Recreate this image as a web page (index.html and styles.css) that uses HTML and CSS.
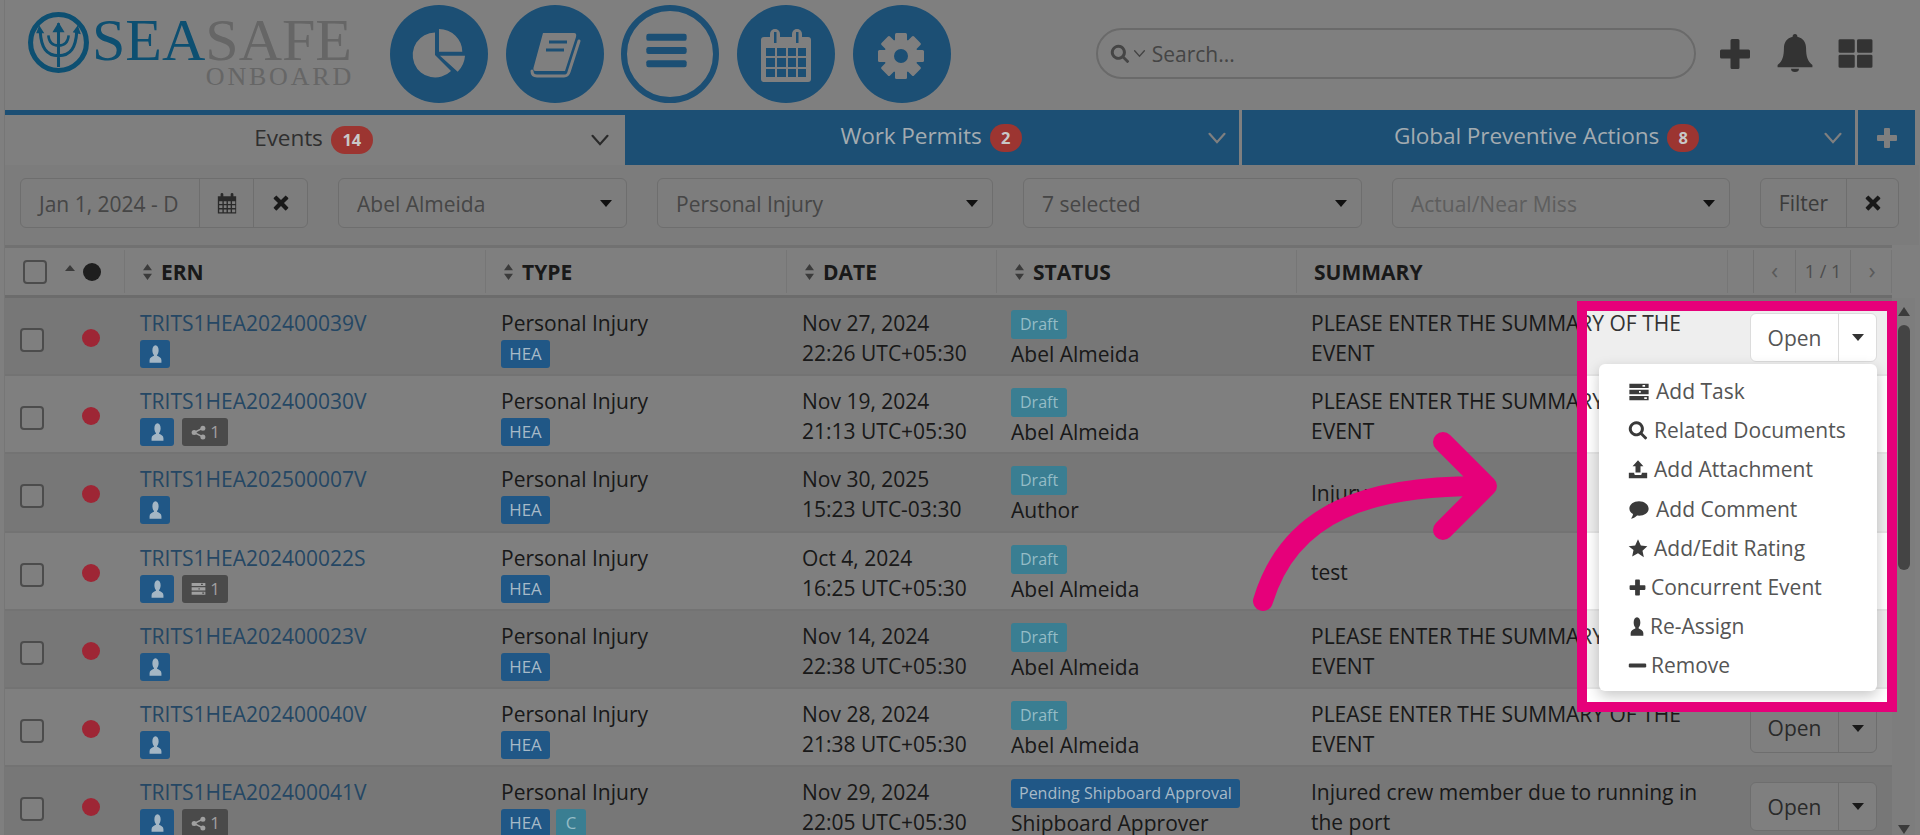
FILE: index.html
```html
<!DOCTYPE html>
<html lang="en">
<head>
<meta charset="utf-8">
<title>SeaSafe Onboard - Events</title>
<link rel="stylesheet" href="styles.css">
</head>
<body>
<svg class="defs" width="0" height="0" aria-hidden="true">
  <symbol id="i-user" viewBox="0 0 24 24" preserveAspectRatio="none"><path d="M12 1.500c3.100 0 5 2.600 5 6 0 2.400-1 4.600-2.500 5.700v1c3.500 1 7 2.500 7 5.300v3H2.500v-3c0-2.800 3.500-4.300 7-5.300v-1C8 12.100 7 9.900 7 7.500c0-3.400 1.900-6 5-6z"/></symbol>
  <symbol id="i-plus" viewBox="0 0 24 24"><path d="M10 2h4a1 1 0 0 1 1 1v6h6a1 1 0 0 1 1 1v4a1 1 0 0 1-1 1h-6v6a1 1 0 0 1-1 1h-4a1 1 0 0 1-1-1v-6H3a1 1 0 0 1-1-1v-4a1 1 0 0 1 1-1h6V3a1 1 0 0 1 1-1z"/></symbol>
  <symbol id="i-x" viewBox="0 0 24 24"><path d="M6.500 2.500 12 8l5.500-5.500a1 1 0 0 1 1.400 0l2.600 2.600a1 1 0 0 1 0 1.400L16 12l5.500 5.500a1 1 0 0 1 0 1.400l-2.600 2.600a1 1 0 0 1-1.400 0L12 16l-5.500 5.500a1 1 0 0 1-1.400 0l-2.600-2.600a1 1 0 0 1 0-1.400L8 12 2.500 6.500a1 1 0 0 1 0-1.400l2.600-2.600a1 1 0 0 1 1.400 0z"/></symbol>
  <symbol id="i-search" viewBox="0 0 24 24"><path fill-rule="evenodd" d="M10 1a9 9 0 1 0 5.200 16.300l5 5.200a1 1 0 0 0 1.400 0l1-1a1 1 0 0 0 0-1.400l-5.100-5.100A9 9 0 0 0 10 1zm0 3.500a5.500 5.500 0 1 1 0 11 5.500 5.500 0 0 1 0-11z"/></symbol>
  <symbol id="i-bell" viewBox="0 0 24 24"><path d="M12 0c1 0 1.500.7 1.500 1.700 3.700.8 5.500 3.700 5.500 7.300 0 5 1 8.500 4 10.500v1.500H1v-1.500C4 17.500 5 14 5 9c0-3.600 1.800-6.500 5.500-7.300C10.500.7 11 0 12 0zM9.500 22h5a2.500 2 0 0 1-5 0z"/></symbol>
  <symbol id="i-grid" viewBox="0 0 24 24" preserveAspectRatio="none"><path d="M2 1h8.500a1 1 0 0 1 1 1v8.500a1 1 0 0 1-1 1H2a1 1 0 0 1-1-1V2a1 1 0 0 1 1-1zM14 1h8a1 1 0 0 1 1 1v8.500a1 1 0 0 1-1 1h-8a1 1 0 0 1-1-1V2a1 1 0 0 1 1-1zM2 13h8.500a1 1 0 0 1 1 1v8a1 1 0 0 1-1 1H2a1 1 0 0 1-1-1v-8a1 1 0 0 1 1-1zM14 13h8a1 1 0 0 1 1 1v8a1 1 0 0 1-1 1h-8a1 1 0 0 1-1-1v-8a1 1 0 0 1 1-1z"/></symbol>
  <symbol id="i-star" viewBox="0 0 24 24"><path d="M12 1l3.400 7.300 7.800 1-5.800 5.400 1.600 7.900L12 17.700l-7 3.900 1.600-7.900L.8 9.300l7.800-1z"/></symbol>
  <symbol id="i-comment" viewBox="0 0 24 24"><path d="M12 2.500C5.900 2.500 1 6.200 1 10.800c0 2.600 1.600 4.900 4.200 6.400-.3 2-1.200 3.700-2.200 5.300 2.900-.5 5.200-2 6.800-3.600.7.100 1.500.1 2.200.1 6.100 0 11-3.400 11-8S18.100 2.500 12 2.500z"/></symbol>
  <symbol id="i-upload" viewBox="0 0 24 24"><path d="M12 1l6.500 7H15v7.500H9V8H5.500zM1 16h6.500v1.500c0 .6.500 1 1 1h7c.5 0 1-.4 1-1V16H23v6.500H1z"/></symbol>
  <symbol id="i-tasks" viewBox="0 0 24 24"><path fill-rule="evenodd" d="M1 3h22v5H1zm15 1.500v2h3v-2zM1 10h22v5H1zm11 1.500v2h2v-2zM1 17h22v5H1zm17 1.500v2h3v-2z"/></symbol>
  <symbol id="i-minus" viewBox="0 0 24 24"><rect x="1" y="9.500" width="22" height="5" rx="1.500"/></symbol>
  <symbol id="i-share" viewBox="0 0 24 24"><circle cx="19" cy="5" r="4"/><circle cx="5" cy="12" r="4"/><circle cx="19" cy="19" r="4"/><path d="M5 12 19 5M5 12l14 7" stroke="currentColor" stroke-width="2.500" fill="none"/></symbol>
  <symbol id="i-cal" viewBox="0 0 24 24"><path fill-rule="evenodd" d="M2 4h3V2a1.500 1.500 0 0 1 3 0v2h8V2a1.500 1.500 0 0 1 3 0v2h3v19H2zm1.500 5.500v3h3.500v-3zm5 0v3h3v-3zm4.500 0v3h3v-3zm4.500 0v3h3.500v-3zm-14 4.500v3h3.500v-3zm5 0v3h3v-3zm4.500 0v3h3v-3zm4.500 0v3h3.500v-3zm-14 4.500v3h3.500v-3zm5 0v3h3v-3zm4.500 0v3h3v-3zm4.500 0v3h3.500v-3z"/></symbol>
  <symbol id="i-chev" viewBox="0 0 24 24"><path d="M3 7l9 10 9-10" fill="none" stroke="currentColor" stroke-width="2.600" stroke-linecap="round"/></symbol>
  <symbol id="i-caret" viewBox="0 0 12 7"><path d="M0 0h12L6 7z"/></symbol>
  <symbol id="i-sort" viewBox="0 0 12 20"><path d="M6 1l5 7H1zM6 19l-5-7h10z"/></symbol>
</svg>

<div class="page">
  <header class="topbar">
    <a class="logo">
      <svg class="logo-mark" viewBox="0 0 62 62">
        <circle cx="31" cy="31" r="27.500" fill="none" stroke="currentColor" stroke-width="5"/>
        <path d="M31 12V55M13 20c1 16 6 24 18 24s17-8 18-24" fill="none" stroke="currentColor" stroke-width="3"/>
        <path d="M31 11l-6 10h12zM12 14l-3 8h8zM50 14l-5 7 8 2z" fill="currentColor"/>
        <path d="M21 24c.5 6 3 10 10 10s9.500-4 10-10" fill="none" stroke="currentColor" stroke-width="2.500"/>
      </svg>
      <span class="logo-text">
        <span class="logo-main"><span class="logo-sea">SEA</span>SAFE</span>
        <span class="logo-sub">ONBOARD</span>
      </span>
    </a>
    <nav class="nav">
      <span class="nav-btn">
        <svg viewBox="0 0 98 98"><path d="M45 50V27.500A22.500 22.500 0 1 0 61 66z M49 46.700V24A23.300 22.700 0 0 1 72.300 46.700z M50 50.700H75A25 25 0 0 1 67.700 66.700z" fill="#fff"/></svg>
      </span>
      <span class="nav-btn">
        <svg viewBox="0 0 98 98"><path d="M37 28H68Q71 28 70 32L59 66H30Q26 66 28 61z" fill="#fff"/><path d="M73 36 63 67Q62 71 58 71H31Q26 71 26 66" fill="none" stroke="#fff" stroke-width="3" stroke-linecap="round"/><path d="M43 37H61M40 45H58" stroke="#389ee8" stroke-width="3"/></svg>
      </span>
      <span class="nav-btn nav-btn-outline">
        <svg viewBox="0 0 98 98"><rect x="22" y="26" width="46" height="8" rx="2.500"/><rect x="22" y="41" width="46" height="8" rx="2.500"/><rect x="22" y="56" width="46" height="8" rx="2.500"/></svg>
      </span>
      <span class="nav-btn">
        <svg viewBox="0 0 98 98"><rect x="24" y="32" width="50" height="45" rx="3" fill="#fff"/><g fill="#389ee8"><path d="M29 43h9v8h-9zM40 43h9v8h-9zM51 43h8v8h-8zM61 43h8v8h-8zM29 53h9v9h-9zM40 53h9v9h-9zM51 53h8v9h-8zM61 53h8v9h-8zM29 64h9v8h-9zM40 64h9v8h-9zM51 64h8v8h-8zM61 64h8v8h-8z"/></g><rect x="33" y="24" width="10" height="16" rx="5" fill="#fff"/><rect x="55" y="24" width="10" height="16" rx="5" fill="#fff"/><rect x="37" y="27" width="2.500" height="11" fill="#389ee8"/><rect x="59" y="27" width="2.500" height="11" fill="#389ee8"/></svg>
      </span>
      <span class="nav-btn">
        <svg viewBox="0 0 98 98"><g transform="translate(48 51)" fill="#fff"><rect x="-6" y="-23" width="12" height="46" rx="1.500"/><rect x="-6" y="-23" width="12" height="46" rx="1.500" transform="rotate(45)"/><rect x="-6" y="-23" width="12" height="46" rx="1.500" transform="rotate(90)"/><rect x="-6" y="-23" width="12" height="46" rx="1.500" transform="rotate(135)"/><circle r="17"/><circle r="7" fill="#389ee8"/></g></svg>
      </span>
    </nav>
    <div class="search">
      <svg class="search-ic"><use href="#i-search"/></svg>
      <svg class="search-chev"><use href="#i-chev"/></svg>
      <span class="search-ph">Search...</span>
    </div>
    <div class="tools">
      <svg class="tool-plus"><use href="#i-plus"/></svg>
      <svg class="tool-bell"><use href="#i-bell"/></svg>
      <svg class="tool-grid"><use href="#i-grid"/></svg>
    </div>
  </header>

  <div class="tabs">
    <div class="tab tab-events">
      <span></span><span class="tab-label lift">Events <b class="pill pill-wide">14</b></span><svg class="tab-chev"><use href="#i-chev"/></svg>
    </div>
    <div class="tab tab-permits">
      <span></span><span class="tab-label lift">Work Permits <b class="pill">2</b></span><svg class="tab-chev"><use href="#i-chev"/></svg>
    </div>
    <div class="tab tab-global">
      <span></span><span class="tab-label lift">Global Preventive Actions <b class="pill">8</b></span><svg class="tab-chev"><use href="#i-chev"/></svg>
    </div>
    <div class="tab-add"><svg><use href="#i-plus"/></svg></div>
  </div>

  <div class="filters">
    <div class="group group-date">
      <span class="field field-date">Jan 1, 2024 - D</span>
      <span class="addon"><svg class="addon-cal"><use href="#i-cal"/></svg></span>
      <span class="addon"><svg class="addon-x"><use href="#i-x"/></svg></span>
    </div>
    <div class="select sel-author"><span>Abel Almeida</span><svg><use href="#i-caret"/></svg></div>
    <div class="select sel-type"><span>Personal Injury</span><svg><use href="#i-caret"/></svg></div>
    <div class="select sel-status"><span>7 selected</span><svg><use href="#i-caret"/></svg></div>
    <div class="select sel-kind"><span class="muted">Actual/Near Miss</span><svg><use href="#i-caret"/></svg></div>
    <div class="group group-filter">
      <span class="addon addon-filter">Filter</span>
      <span class="addon"><svg class="addon-x"><use href="#i-x"/></svg></span>
    </div>
  </div>

  <div class="thead">
    <div class="th th-sel"><span class="check check-head"></span><svg class="sort-up"><use href="#i-caret"/></svg><span class="dot dot-head"></span></div>
    <div class="th"><svg class="sort"><use href="#i-sort"/></svg>ERN</div>
    <div class="th"><svg class="sort"><use href="#i-sort"/></svg>TYPE</div>
    <div class="th"><svg class="sort"><use href="#i-sort"/></svg>DATE</div>
    <div class="th"><svg class="sort"><use href="#i-sort"/></svg>STATUS</div>
    <div class="th th-summary">SUMMARY</div>
    <div class="pager"><span class="pg-arrow">&#8249;</span><span class="pg-num">1 / 1</span><span class="pg-arrow">&#8250;</span></div>
  </div>

  <div class="tbody">
    <div class="rows">
      <div class="row odd">
        <div class="cell-sel"><span class="check"></span><span class="dot"></span></div>
        <div class="cell"><a class="ern">TRITS1HEA202400039V</a><div class="tags"><span class="tag tag-user"><svg><use href="#i-user"/></svg></span></div></div>
        <div class="cell">Personal Injury<div class="tags"><span class="tag tag-blue">HEA</span></div></div>
        <div class="cell">Nov 27, 2024<br>22:26 UTC+05:30</div>
        <div class="cell cell-status"><span class="state state-draft">Draft</span>Abel Almeida</div>
        <div class="cell cell-summary">PLEASE ENTER THE SUMMARY OF THE EVENT</div>
        <div class="cell-action">
          <div class="open"><span class="open-main">Open</span><span class="open-caret"><svg><use href="#i-caret"/></svg></span></div>
          <ul class="menu">
            <li><svg class="m-task"><use href="#i-tasks"/></svg>Add Task</li>
            <li><svg class="m-mid"><use href="#i-search"/></svg>Related Documents</li>
            <li><svg class="m-mid"><use href="#i-upload"/></svg>Add Attachment</li>
            <li><svg class="m-task"><use href="#i-comment"/></svg>Add Comment</li>
            <li><svg class="m-mid"><use href="#i-star"/></svg>Add/Edit Rating</li>
            <li><svg class="m-short"><use href="#i-plus"/></svg>Concurrent Event</li>
            <li><svg class="m-user"><use href="#i-user"/></svg>Re-Assign</li>
            <li><svg class="m-short"><use href="#i-minus"/></svg>Remove</li>
          </ul>
        </div>
      </div>
      <div class="row">
        <div class="cell-sel"><span class="check"></span><span class="dot"></span></div>
        <div class="cell"><a class="ern">TRITS1HEA202400030V</a><div class="tags"><span class="tag tag-user tag-user-w"><svg><use href="#i-user"/></svg></span><span class="tag tag-count"><svg><use href="#i-share"/></svg>1</span></div></div>
        <div class="cell">Personal Injury<div class="tags"><span class="tag tag-blue">HEA</span></div></div>
        <div class="cell">Nov 19, 2024<br>21:13 UTC+05:30</div>
        <div class="cell cell-status"><span class="state state-draft">Draft</span>Abel Almeida</div>
        <div class="cell cell-summary">PLEASE ENTER THE SUMMARY OF THE EVENT</div>
        <div class="cell-action"><div class="open"><span class="open-main">Open</span><span class="open-caret"><svg><use href="#i-caret"/></svg></span></div></div>
      </div>
      <div class="row odd">
        <div class="cell-sel"><span class="check"></span><span class="dot"></span></div>
        <div class="cell"><a class="ern">TRITS1HEA202500007V</a><div class="tags"><span class="tag tag-user"><svg><use href="#i-user"/></svg></span></div></div>
        <div class="cell">Personal Injury<div class="tags"><span class="tag tag-blue">HEA</span></div></div>
        <div class="cell">Nov 30, 2025<br>15:23 UTC-03:30</div>
        <div class="cell cell-status"><span class="state state-draft">Draft</span>Author</div>
        <div class="cell cell-summary cell-mid">Injury</div>
        <div class="cell-action"><div class="open"><span class="open-main">Open</span><span class="open-caret"><svg><use href="#i-caret"/></svg></span></div></div>
      </div>
      <div class="row">
        <div class="cell-sel"><span class="check"></span><span class="dot"></span></div>
        <div class="cell"><a class="ern">TRITS1HEA202400022S</a><div class="tags"><span class="tag tag-user tag-user-w"><svg><use href="#i-user"/></svg></span><span class="tag tag-count"><svg><use href="#i-tasks"/></svg>1</span></div></div>
        <div class="cell">Personal Injury<div class="tags"><span class="tag tag-blue">HEA</span></div></div>
        <div class="cell">Oct 4, 2024<br>16:25 UTC+05:30</div>
        <div class="cell cell-status"><span class="state state-draft">Draft</span>Abel Almeida</div>
        <div class="cell cell-summary cell-mid">test</div>
        <div class="cell-action"><div class="open"><span class="open-main">Open</span><span class="open-caret"><svg><use href="#i-caret"/></svg></span></div></div>
      </div>
      <div class="row odd">
        <div class="cell-sel"><span class="check"></span><span class="dot"></span></div>
        <div class="cell"><a class="ern">TRITS1HEA202400023V</a><div class="tags"><span class="tag tag-user"><svg><use href="#i-user"/></svg></span></div></div>
        <div class="cell">Personal Injury<div class="tags"><span class="tag tag-blue">HEA</span></div></div>
        <div class="cell">Nov 14, 2024<br>22:38 UTC+05:30</div>
        <div class="cell cell-status"><span class="state state-draft">Draft</span>Abel Almeida</div>
        <div class="cell cell-summary">PLEASE ENTER THE SUMMARY OF THE EVENT</div>
        <div class="cell-action"><div class="open"><span class="open-main">Open</span><span class="open-caret"><svg><use href="#i-caret"/></svg></span></div></div>
      </div>
      <div class="row">
        <div class="cell-sel"><span class="check"></span><span class="dot"></span></div>
        <div class="cell"><a class="ern">TRITS1HEA202400040V</a><div class="tags"><span class="tag tag-user"><svg><use href="#i-user"/></svg></span></div></div>
        <div class="cell">Personal Injury<div class="tags"><span class="tag tag-blue">HEA</span></div></div>
        <div class="cell">Nov 28, 2024<br>21:38 UTC+05:30</div>
        <div class="cell cell-status"><span class="state state-draft">Draft</span>Abel Almeida</div>
        <div class="cell cell-summary">PLEASE ENTER THE SUMMARY OF THE EVENT</div>
        <div class="cell-action"><div class="open"><span class="open-main">Open</span><span class="open-caret"><svg><use href="#i-caret"/></svg></span></div></div>
      </div>
      <div class="row odd">
        <div class="cell-sel"><span class="check"></span><span class="dot"></span></div>
        <div class="cell"><a class="ern">TRITS1HEA202400041V</a><div class="tags"><span class="tag tag-user tag-user-w"><svg><use href="#i-user"/></svg></span><span class="tag tag-count"><svg><use href="#i-share"/></svg>1</span></div></div>
        <div class="cell">Personal Injury<div class="tags"><span class="tag tag-blue">HEA</span><span class="tag tag-c">C</span></div></div>
        <div class="cell">Nov 29, 2024<br>22:05 UTC+05:30</div>
        <div class="cell cell-status"><span class="state state-pending">Pending Shipboard Approval</span>Shipboard Approver</div>
        <div class="cell cell-summary">Injured crew member due to running in the port</div>
        <div class="cell-action"><div class="open"><span class="open-main">Open</span><span class="open-caret"><svg><use href="#i-caret"/></svg></span></div></div>
      </div>
    </div>
    <div class="scrollbar">
      <span class="sb-up"></span>
      <span class="sb-thumb"></span>
      <span class="sb-fill"></span>
      <span class="sb-down"></span>
    </div>
  </div>
</div>

<div class="spotlight"></div>
<svg class="callout" viewBox="0 0 260 180">
  <path d="M13 170C40 80 120 54 235 55M193 11 237 55 193 99" fill="none" stroke="#e6007a" stroke-width="20" stroke-linecap="round" stroke-linejoin="round"/>
</svg>
</body>
</html>
```

FILE: styles.css
```css
* { box-sizing: border-box; }

html, body {
  margin: 0;
  height: 835px;
  overflow: hidden;
  background: #fff;
  font-family: "Open Sans", "Noto Sans", sans-serif;
  font-size: 21px;
  color: #3a3a3a;
}

.defs { position: absolute; }
svg { fill: currentColor; display: block; }

.page {
  width: 1915px;
  height: 835px;
  margin-left: 4px;
  border-left: 1px solid #ececec;
  overflow: hidden;
}

/* Lifted: items painted above the dimming layer in their final tone */
.lift, .dot, .pill, .tag, .state { position: relative; z-index: 11; }

/* Top bar */
.topbar {
  height: 110px;
  display: flex;
  align-items: flex-start;
  padding-top: 5px;
}

.logo {
  width: 385px;
  display: flex;
  padding: 6px 0 0 22px;
  color: #1a9ee2;
}

.logo-mark { width: 63px; height: 63px; flex: none; }

.logo-text {
  display: flex;
  flex-direction: column;
  align-items: flex-end;
  margin: 6px 0 0 6px;
  font-family: "Liberation Serif", serif;
  color: #cccccc;
  width: 256px;
}

.logo-main {
  font-size: 60px;
  line-height: 46px;
  height: 46px;
  letter-spacing: 0;
  white-space: nowrap;
}

.logo-sea { color: #1a9ee2; }

.logo-sub {
  font-size: 26px;
  line-height: 24px;
  letter-spacing: 2.8px;
  margin: 2px -2px 0 0;
}

.nav { display: flex; gap: 17.700px; }

.nav-btn {
  width: 98px;
  height: 98px;
  border-radius: 50%;
  background: #389ee8;
  display: block;
}

.nav-btn svg { width: 98px; height: 98px; }

.nav-btn-outline {
  background: #fff;
  border: 6px solid #389ee8;
  color: #389ee8;
}

.nav-btn-outline svg { width: 86px; height: 86px; }

.search {
  width: 600px;
  height: 51px;
  margin: 23px 0 0 145px;
  border: 2px solid #d4d4d4;
  border-radius: 26px;
  display: flex;
  align-items: center;
  padding-left: 12px;
  color: #8a8a8a;
}

.search-ic { width: 20px; height: 20px; }
.search-chev { width: 13px; height: 13px; margin: 0 6px 0 3px; }

.tools {
  display: flex;
  align-items: center;
  margin: 28px 0 0 24px;
  color: #666;
}

.tool-plus { width: 36px; height: 36px; margin-left: -3px; }
.tool-bell { width: 38px; height: 42px; margin: -1px 0 0 23px; }
.tool-grid { width: 37px; height: 31px; margin: 0 0 0 23px; }

/* Tabs */
.tabs { display: flex; height: 55px; gap: 3px; }

.tab {
  display: grid;
  grid-template-columns: 1fr auto 1fr;
  align-items: center;
  background: #389ee8;
  padding-right: 12px;
  color: #fff;
}

.tab-events {
  width: 620px;
  margin-right: -3px;
  background: #fff;
  border-top: 5px solid #389ee8;
  color: #555;
  padding: 0 15px 0 12px;
}

.tab-permits { width: 614px; padding-left: 10px; }
.tab-global { width: 613px; padding-left: 8px; }

.tab-label {
  display: flex;
  align-items: center;
  gap: 8px;
  font-size: 22.600px;
  line-height: 30px;
  margin-top: -4px;
  color: #a3abb0;
  letter-spacing: -0.1px;
}

.tab-events .tab-label { color: #2f2f2f; margin-top: -4px; }

.tab-chev {
  width: 20px;
  height: 20px;
  justify-self: end;
}

.tab-add {
  width: 57px;
  background: #389ee8;
  color: #fff;
  display: flex;
  align-items: center;
  justify-content: center;
}

.tab-add svg { width: 24px; height: 24px; }

.pill {
  min-width: 32px;
  height: 28px;
  padding: 0 8px;
  border-radius: 14px;
  background: #9c3531;
  color: #c8c8c8;
  font-size: 16.500px;
  font-weight: 700;
  line-height: 28px;
  text-align: center;
  margin-top: 4px;
}

.pill-wide { min-width: 42px; }

/* Filters */
.filters {
  height: 80px;
  background: #f8f8f8;
  display: flex;
  gap: 30px;
  padding: 13px 0 0 15px;
  color: #8c8c8c;
  font-size: 21px;
}

.group, .select {
  height: 50px;
  border: 1px solid #dcdcdc;
  border-radius: 6px;
  background: #fafafa;
  display: flex;
  align-items: stretch;
}

.group-date { width: 288px; }
.group-filter { width: 139px; }
.sel-author { width: 289px; }
.sel-type { width: 336px; }
.sel-status { width: 339px; }
.sel-kind { width: 338px; }

.field {
  display: flex;
  align-items: center;
  padding: 2px 0 0 18px;
  white-space: nowrap;
  overflow: hidden;
}

.field-date { width: 178px; flex: none; }

.addon {
  flex: 1;
  border-left: 1px solid #dcdcdc;
  display: flex;
  align-items: center;
  justify-content: center;
  color: #333;
}

.addon:first-child { border-left: 0; }
.addon-filter { flex: 0 0 85px; color: #777; }
.addon-cal { width: 22px; height: 25px; color: #555; }
.addon-x { width: 18px; height: 18px; }

.select {
  justify-content: space-between;
  align-items: center;
  padding: 0 14px 0 18px;
}

.select span { padding-top: 2px; }
.select svg { width: 12px; height: 7px; color: #222; }
.muted { color: #bcbcbc; }

/* Table head */
.thead {
  height: 53px;
  background: #fff;
  border-top: 3px solid #e2e2e2;
  border-bottom: 3px solid #d8d8d8;
  display: grid;
  grid-template-columns: 119px 361px 301px 210px 300px 431px 165px;
  width: 1887px;
  font-weight: 700;
  font-size: 21px;
  color: #333;
  align-items: center;
}

.th {
  height: 43px;
  display: flex;
  align-items: center;
  gap: 8px;
  padding-left: 17px;
  border-left: 1px solid #ececec;
}

.th-summary { padding-left: 17px; }

.th-sel {
  border-left: 0;
  padding-left: 18px;
  gap: 0;
}

.sort { width: 11px; height: 18px; color: #777; }

.sort-up {
  width: 10px;
  height: 6px;
  margin: -8px 0 0 18px;
  color: #777;
  transform: rotate(180deg);
}

.pager {
  display: grid;
  grid-template-columns: 25px 42px 56px 42px;
  height: 43px;
  align-items: center;
  text-align: center;
  font-weight: 400;
  color: #9a9a9a;
  font-size: 18px;
  border-left: 1px solid #ececec;
  border-right: 1px solid #ececec;
}

.pg-arrow {
  grid-column: 2;
  border-left: 1px solid #e4e4e4;
  height: 43px;
  line-height: 40px;
  font-size: 24px;
  color: #b4b4b4;
}

.pg-num {
  grid-column: 3;
  height: 43px;
  line-height: 43px;
  border-left: 1px solid #e4e4e4;
  border-right: 1px solid #e4e4e4;
}

.pg-arrow:last-child { grid-column: 4; border-left: 0; }

/* Rows */
.tbody { display: flex; height: 537px; }

.rows { width: 1887px; flex: none; }

.row {
  display: grid;
  grid-template-columns: 119px 361px 301px 210px 300px 431px 165px;
  height: 78.200px;
  background: #fff;
  border-bottom: 2px solid #e6e6e6;
  line-height: 30px;
  color: #333;
}

.row.odd { background: #eeeeee; }

.cell-sel {
  display: flex;
  align-items: center;
  padding: 4px 0 0 15px;
}

.cell { padding: 10px 0 0 16px; white-space: nowrap; }
.cell-summary { padding-left: 15px; white-space: normal; padding-right: 24px; }
.cell-mid { padding-top: 24px; }
.cell-status {
  padding: 12px 0 0 15px;
  display: flex;
  flex-direction: column;
  align-items: flex-start;
}

.check {
  flex: none;
  width: 24px;
  height: 24px;
  margin-top: 4px;
  border: 2px solid #999;
  border-radius: 4px;
  background: #fff;
}

.check-head { margin-top: 0; }

.dot {
  flex: none;
  width: 18px;
  height: 18px;
  border-radius: 50%;
  margin-left: 38px;
  background: #9e2635;
}

.dot-head { background: #1e1e1e; margin-left: 8px; }

.ern { color: #4a8fc8; display: block; }

.tags { display: flex; gap: 8px; margin-top: 2px; }

.tag {
  height: 28px;
  border-radius: 3px;
  display: flex;
  align-items: center;
  justify-content: center;
  font-size: 16.800px;
  line-height: 28px;
}

.tag-user { width: 30px; background: #205786; color: #a4b6c4; }
.tag-user-w { width: 34px; }
.tag-user svg { width: 15px; height: 20px; }
.tag-blue { width: 49px; background: #205786; color: #a7bac8; }
.tag-c { width: 30px; background: #3a7e92; color: #95bcc6; margin-left: -2px; }

.tag-count {
  width: 46px;
  gap: 3px;
  background: #4a4a4a;
  color: #a0a0a0;
}

.tag-count svg { width: 17px; height: 15px; }

.state {
  height: 29px;
  border-radius: 3px;
  padding: 0 9px;
  font-size: 16px;
  line-height: 29px;
}

.state-draft { background: #3a7e92; color: #95bcc6; }
.state-pending { background: #205786; color: #a7bac8; padding: 0 8px; }

.cell-action { position: relative; }

.open {
  width: 127px;
  height: 49px;
  margin: 15px 0 0 23px;
  border: 1px solid #dcdcdc;
  border-radius: 6px;
  background: #fff;
  display: flex;
  color: #555;
  font-size: 21px;
}

.open-main {
  width: 88px;
  display: flex;
  align-items: center;
  justify-content: center;
  border-right: 1px solid #dcdcdc;
}

.open-caret {
  flex: 1;
  display: flex;
  align-items: center;
  justify-content: center;
  color: #333;
}

.open-caret svg { width: 12px; height: 7px; }

/* Dropdown */
.menu {
  position: absolute;
  top: 66px;
  left: -128px;
  z-index: 5;
  width: 278px;
  height: 327px;
  margin: 0;
  padding: 8px 0 0 30px;
  list-style: none;
  background: #fff;
  border-radius: 6px;
  box-shadow: 0 5px 14px rgba(0, 0, 0, 0.22);
  color: #555;
}

.menu li {
  height: 39.200px;
  display: flex;
  align-items: center;
  gap: 6px;
  line-height: 39px;
  white-space: nowrap;
}

.menu svg { height: 21px; color: #3a3a3a; }
.m-task { width: 22px; margin-left: -1px; }
.m-mid { width: 20px; margin-left: -1px; }
.m-short { width: 19px; margin-left: -1px; margin-right: -2px; }
.m-user { width: 16px; margin-right: -1px; }

/* Scrollbar */
.scrollbar {
  width: 23px;
  display: flex;
  flex-direction: column;
  align-items: center;
  background: #fbfbfb;
}

.sb-up, .sb-down {
  width: 0;
  height: 0;
  border-left: 6px solid transparent;
  border-right: 6px solid transparent;
}

.sb-up { border-bottom: 9px solid #777; margin-top: 9px; }
.sb-down { border-top: 9px solid #777; margin-bottom: 1px; }

.sb-thumb {
  width: 12px;
  height: 245px;
  margin-top: 9px;
  border-radius: 6px;
  background: #888;
}

.sb-fill { flex: 1; }

/* Callout layer */
.spotlight {
  position: absolute;
  left: 1577px;
  top: 301px;
  width: 320px;
  height: 411px;
  z-index: 10;
  border: 10px solid #e6007a;
  box-shadow: 0 0 0 3000px rgba(0, 0, 0, 0.5);
}

.callout {
  position: absolute;
  left: 1250px;
  top: 431px;
  width: 260px;
  height: 180px;
  z-index: 12;
}
```
